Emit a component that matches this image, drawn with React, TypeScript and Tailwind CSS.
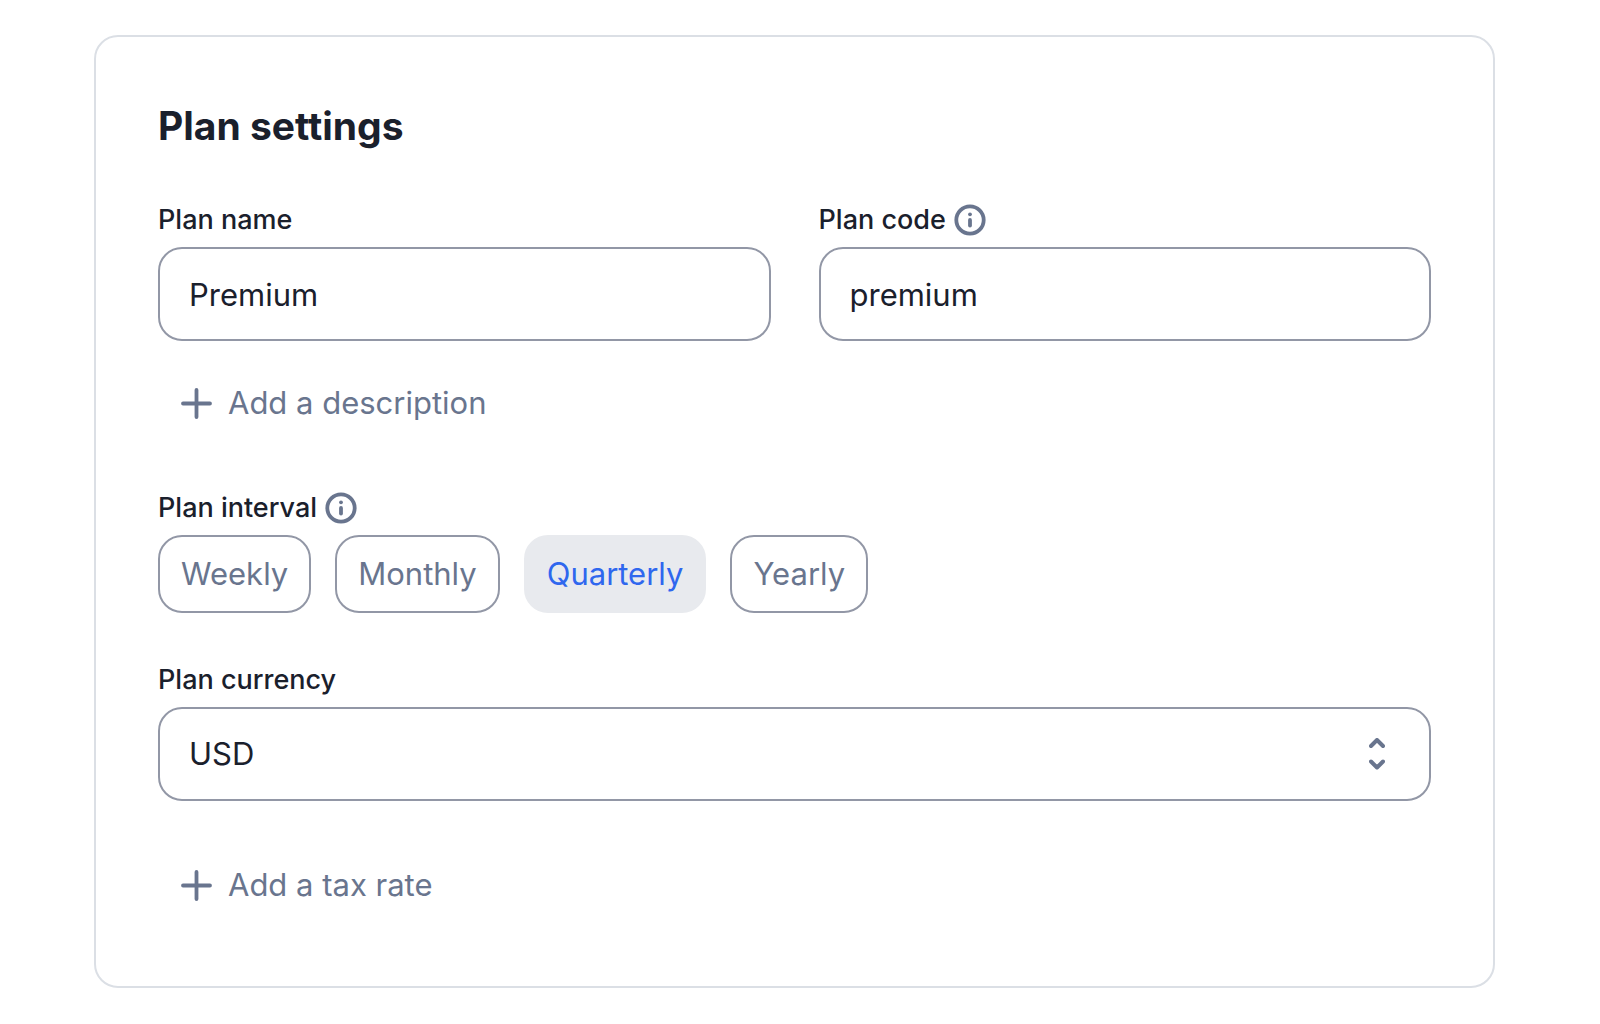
import { useState } from "react";

const intervals = ["Weekly", "Monthly", "Quarterly", "Yearly"];

const InfoIcon = () => (
  <svg width="32" height="32" viewBox="0 0 32 32" fill="none" stroke="#69758e" strokeWidth="3.8" aria-hidden="true">
    <circle cx="16" cy="16" r="13.7" />
    <path d="M16 16v5.5" strokeLinecap="round" />
    <circle cx="16" cy="10.3" r="1.9" fill="#69758e" stroke="none" />
  </svg>
);

const AddButton = ({ children }: { children: string }) => (
  <button type="button" className="flex h-16 items-center gap-4 px-[23px] text-[31px] text-[#69758e]">
    <svg
      width="31"
      height="31"
      viewBox="0 0 31 31"
      stroke="currentColor"
      strokeWidth="3.8"
      strokeLinecap="round"
      aria-hidden="true"
    >
      <path d="M2 15.5h27M15.5 2v27" />
    </svg>
    {children}
  </button>
);

const labelClass = "flex h-8 items-center gap-2 text-[27px] font-medium text-[#1a202c]";
const fieldClass =
  "h-[94px] w-full appearance-none rounded-3xl border-2 border-[#9297a6] bg-white px-[29px] text-[31px] text-[#1a202c]";

const App = () => {
  const [selected, setSelected] = useState("Quarterly");

  return (
    <main className="bg-white pt-[35px] pr-[105px] pb-9 pl-[94px] font-['Inter',sans-serif]">
      <form className="flex flex-col rounded-3xl border-2 border-[#dbdfe5] px-[62px] pt-[61px] pb-[69px]">
        <h1 className="text-[39px] leading-[56px] font-bold text-[#1a202c]">Plan settings</h1>

        <div className="mt-[50px] grid grid-cols-2 gap-12">
          <div>
            <label htmlFor="name" className={labelClass}>Plan name</label>
            <input id="name" defaultValue="Premium" className={`mt-[11px] ${fieldClass}`} />
          </div>
          <div>
            <label htmlFor="code" className={labelClass}>
              Plan code
              <InfoIcon />
            </label>
            <input id="code" defaultValue="premium" className={`mt-[11px] ${fieldClass}`} />
          </div>
        </div>

        <div className="mt-[30px] flex">
          <AddButton>Add a description</AddButton>
        </div>

        <fieldset className="mt-[57px]">
          <legend className={labelClass}>
            Plan interval
            <InfoIcon />
          </legend>
          <div className="mt-[11px] flex gap-6">
            {intervals.map((interval) => (
              <button
                key={interval}
                type="button"
                aria-pressed={interval === selected}
                onClick={() => setSelected(interval)}
                className={`h-[78px] rounded-3xl border-2 px-[21px] text-[31px] ${
                  interval === selected
                    ? "border-[#e8eaee] bg-[#e8eaee] text-[#2f67ee]"
                    : "border-[#9297a6] text-[#69758e]"
                }`}
              >
                {interval}
              </button>
            ))}
          </div>
        </fieldset>

        <label htmlFor="currency" className={`mt-[51px] ${labelClass}`}>Plan currency</label>
        <div className="relative mt-[11px]">
          <select id="currency" className={fieldClass}>
            <option>USD</option>
            <option>EUR</option>
          </select>
          <svg
            className="pointer-events-none absolute inset-y-0 right-[46px] my-auto"
            width="16"
            height="32"
            viewBox="0 0 16 32"
            fill="none"
            stroke="#69758e"
            strokeWidth="4"
            strokeLinecap="round"
            strokeLinejoin="round"
            aria-hidden="true"
          >
            <path d="M2 8l6-6 6 6M2 23.5l6 6 6-6" />
          </svg>
        </div>

        <div className="mt-[52px] flex">
          <AddButton>Add a tax rate</AddButton>
        </div>
      </form>
    </main>
  );
};

export default App;
